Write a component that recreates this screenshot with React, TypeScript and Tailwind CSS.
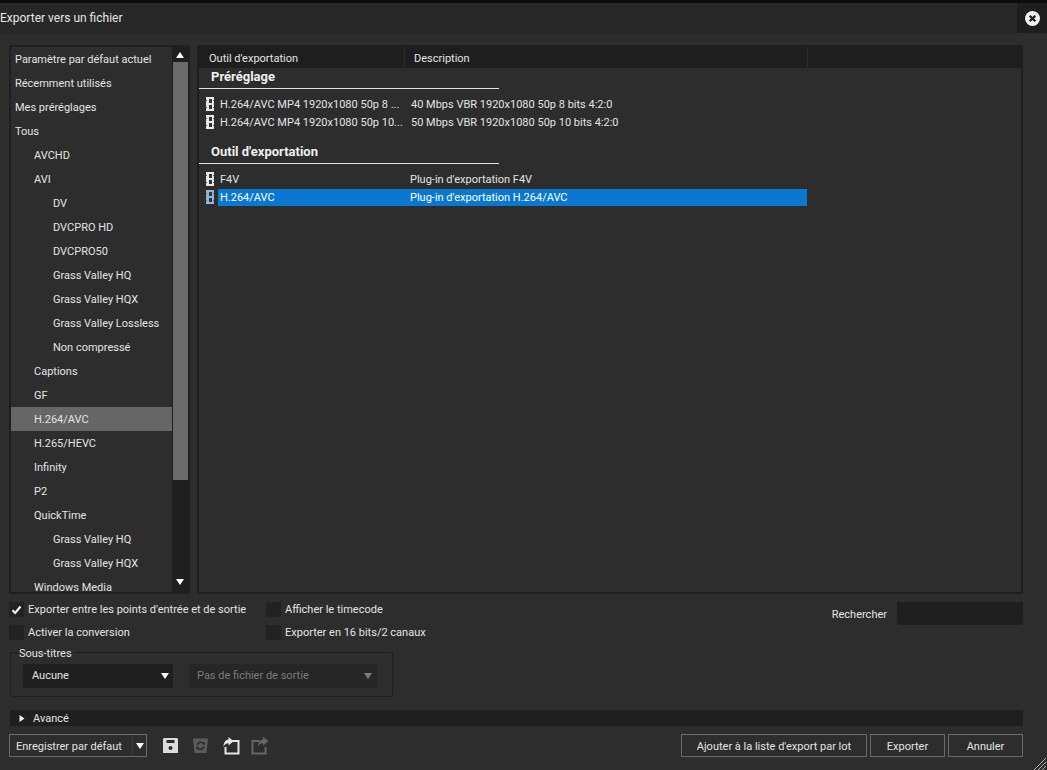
import React from "react";

const tree: [string, number][] = [
  ["Paramètre par défaut actuel", 0],
  ["Récemment utilisés", 0],
  ["Mes préréglages", 0],
  ["Tous", 0],
  ["AVCHD", 1],
  ["AVI", 1],
  ["DV", 2],
  ["DVCPRO HD", 2],
  ["DVCPRO50", 2],
  ["Grass Valley HQ", 2],
  ["Grass Valley HQX", 2],
  ["Grass Valley Lossless", 2],
  ["Non compressé", 2],
  ["Captions", 1],
  ["GF", 1],
  ["H.264/AVC", 1],
  ["H.265/HEVC", 1],
  ["Infinity", 1],
  ["P2", 1],
  ["QuickTime", 1],
  ["Grass Valley HQ", 2],
  ["Grass Valley HQX", 2],
  ["Windows Media", 1],
];

function Film({ color = "#e8e8e8" }: { color?: string }) {
  return (
    <svg width="8" height="14" viewBox="0 0 8 14" className="shrink-0">
      <rect x="0" y="0" width="8" height="14" fill={color} />
      <rect x="3" y="2" width="3" height="4" fill="#333333" />
      <rect x="3" y="8" width="3" height="4" fill="#333333" />
      <rect x="0" y="3" width="1" height="1" fill="#666666" />
      <rect x="0" y="10" width="1" height="1" fill="#666666" />
      <rect x="7" y="3" width="1" height="1" fill="#666666" />
      <rect x="7" y="10" width="1" height="1" fill="#666666" />
    </svg>
  );
}

function Row({ name, desc, selected, descPad = 0 }: { name: string; desc: string; selected?: boolean; descPad?: number }) {
  return (
    <div className="flex h-[18px] w-[608px] items-center pl-[7px]">
      <Film color={selected ? "#8db8dc" : "#e8e8e8"} />
      <div className={`ml-[4px] flex h-[17px] flex-1 items-center pt-[2px] ${selected ? "bg-[#0a78d2] text-white" : ""}`}>
        <span className="w-[192px] shrink-0 overflow-hidden pl-[2px] whitespace-nowrap">{name}</span>
        <span style={{ paddingLeft: descPad }}>{desc}</span>
      </div>
    </div>
  );
}

function Section({ title }: { title: string }) {
  return (
    <div className="h-[21px] w-[300px] border-b border-[#e0e0e0] pl-[12px] pt-[1px] text-[13px] leading-[16px] font-bold text-[#f0f0f0]">
      {title}
    </div>
  );
}

function Check({ checked, label }: { checked?: boolean; label: string }) {
  return (
    <div className="flex h-[15px] items-center gap-[4px] whitespace-nowrap">
      <div className="flex h-[15px] w-[15px] shrink-0 items-center justify-center bg-[#222222]">
        {checked && (
          <svg width="11" height="10" viewBox="0 0 11 10">
            <path d="M1.5 5.2 L4.2 8 L9.5 1.5" fill="none" stroke="#fff" strokeWidth="2" />
          </svg>
        )}
      </div>
      <span className="pt-[2px]">{label}</span>
    </div>
  );
}

function Caret({ up, color = "#fff" }: { up?: boolean; color?: string }) {
  return (
    <svg width="8" height="6" viewBox="0 0 8 6">
      <path d={up ? "M4 0 L8 6 L0 6 Z" : "M0 0 L8 0 L4 6 Z"} fill={color} />
    </svg>
  );
}

export default function App() {
  return (
    <div
      className="flex h-[770px] w-[1047px] flex-col overflow-hidden bg-[#2d2d2d] text-[11px] text-[#e4e4e4]"
      style={{ fontFamily: 'Roboto, "Open Sans", sans-serif' }}
    >
      <div className="h-[3px] shrink-0 bg-[#0c0c0c]" />
      <div className="flex h-[30px] shrink-0 items-center bg-[#272727] text-[12px] text-[#e6e6e6]">
        <span className="flex-1">Exporter vers un fichier</span>
        <div className="flex h-[30px] w-[30px] items-center justify-center bg-[#1e1e1e]">
          <svg width="15" height="15" viewBox="0 0 15 15">
            <circle cx="7.5" cy="7.5" r="7.5" fill="#f0f0f0" />
            <path d="M4.7 4.7 L10.3 10.3 M10.3 4.7 L4.7 10.3" stroke="#1e1e1e" strokeWidth="2.2" />
          </svg>
        </div>
      </div>

      <div className="mt-[12px] flex h-[549px] shrink-0 gap-[7px] pl-[9px] pr-[24px]">
        <div className="flex w-[181px] shrink-0 rounded-[2px] border-[2px] border-[#1f1f1f] bg-[#2d2d2d]">
          <div className="h-full flex-1 overflow-hidden">
            {tree.map(([t, d], i) => (
              <div
                key={i}
                className={`flex h-[24px] items-center pt-[3px] whitespace-nowrap ${t === "H.264/AVC" ? "bg-[#666666]" : ""} ${d === 0 ? "pl-[4px]" : d === 1 ? "pl-[23px]" : "pl-[42px]"}`}
              >
                {t}
              </div>
            ))}
          </div>
          <div className="flex h-full w-[16px] shrink-0 flex-col items-center bg-[#1f1f1f]">
            <div className="flex h-[15px] items-center justify-center"><Caret up /></div>
            <div className="h-[418px] w-[15px] bg-[#6b6b6b]" />
            <div className="flex-1" />
            <div className="flex h-[20px] items-center justify-center"><Caret /></div>
          </div>
        </div>

        <div className="flex-1 rounded-[2px] border-[2px] border-[#1f1f1f] bg-[#2d2d2d]">
          <div className="flex h-[21px] items-center bg-[#1e1e1e]">
            <div className="h-full w-[206px] border-r border-[#2d2d2d] pl-[10px] leading-[23px]">Outil d'exportation</div>
            <div className="h-full w-[403px] border-r border-[#2d2d2d] pl-[9px] leading-[23px]">Description</div>
          </div>
          <Section title="Préréglage" />
          <div className="mt-[6px]">
            <Row name="H.264/AVC MP4 1920x1080 50p 8 ..." desc="40 Mbps VBR 1920x1080 50p 8 bits 4:2:0" descPad={1} />
            <Row name="H.264/AVC MP4 1920x1080 50p 10..." desc="50 Mbps VBR 1920x1080 50p 10 bits 4:2:0" descPad={1} />
          </div>
          <div className="mt-[12px]" />
          <Section title="Outil d'exportation" />
          <div className="mt-[6px]">
            <Row name="F4V" desc="Plug-in d'exportation F4V" />
            <Row name="H.264/AVC" desc="Plug-in d'exportation H.264/AVC" selected />
          </div>
        </div>
      </div>

      <div className="mt-[8px] flex h-[46px] shrink-0 pl-[9px] pr-[24px]">
        <div className="flex w-[257px] flex-col gap-[8px]">
          <Check checked label="Exporter entre les points d'entrée et de sortie" />
          <Check label="Activer la conversion" />
        </div>
        <div className="flex flex-col gap-[8px]">
          <Check label="Afficher le timecode" />
          <Check label="Exporter en 16 bits/2 canaux" />
        </div>
        <div className="ml-auto flex h-[23px] items-center gap-[10px]">
          <span className="pt-[4px]">Rechercher</span>
          <div className="h-[23px] w-[126px] rounded-[2px] bg-[#1f1f1f]" />
        </div>
      </div>

      <div className="relative ml-[10px] mt-[4px] flex h-[45px] w-[383px] shrink-0 items-center gap-[16px] rounded-[2px] border border-[#1f1f1f] pl-[12px]">
        <span className="absolute left-[6px] top-[-7px] bg-[#2d2d2d] px-[2px] leading-[16px]">Sous-titres</span>
        <div className="mt-[2px] flex h-[24px] w-[150px] items-center justify-between rounded-[2px] bg-[#1f1f1f] pl-[9px] pr-[4px]">
          <span className="pt-[2px]">Aucune</span>
          <Caret />
        </div>
        <div className="mt-[2px] flex h-[24px] w-[188px] items-center justify-between rounded-[2px] bg-[#262626] pl-[8px] pr-[5px] text-[#7c7c7c]">
          <span className="pt-[2px]">Pas de fichier de sortie</span>
          <Caret color="#7c7c7c" />
        </div>
      </div>

      <div className="ml-[10px] mr-[24px] mt-[13px] flex h-[16px] shrink-0 items-center bg-[#1f1f1f] pl-[9px]">
        <svg width="6" height="7" viewBox="0 0 6 7"><path d="M0.5 0 L5.5 3.5 L0.5 7 Z" fill="#eee" /></svg>
        <span className="ml-[8px] pt-[2px]">Avancé</span>
      </div>

      <div className="ml-[9px] mr-[24px] mt-[8px] flex h-[23px] shrink-0 items-center">
        <div className="flex h-[23px] w-[138px] items-center border border-[#6a6a6a]">
          <span className="w-[122px] pl-[6px] pt-[3px] whitespace-nowrap">Enregistrer par défaut</span>
          <div className="flex h-full flex-1 items-center justify-center border-l border-[#3c3c3c]"><Caret /></div>
        </div>
        <div className="ml-[16px] flex items-center gap-[15px]">
          <svg width="15" height="15" viewBox="0 0 15 15">
            <path d="M1 0 H14 L15 1 V15 H0 V1 Z" fill="#dcdcdc" />
            <rect x="3.5" y="2" width="8" height="3" fill="#2d2d2d" />
            <circle cx="7.5" cy="10" r="2" fill="#2d2d2d" />
          </svg>
          <svg width="15" height="15" viewBox="0 0 15 15">
            <path d="M0 0.5 H15 L13.5 15 H1.5 Z" fill="#5a5a5a" />
            <path d="M10.8 6 A3.6 3.6 0 0 0 4.2 7 M4.2 9.5 A3.6 3.6 0 0 0 10.8 8.5" fill="none" stroke="#2d2d2d" strokeWidth="1.6" />
            <path d="M9 6.5 H12 V3.8 Z M6 8.5 H3 V11.2 Z" fill="#2d2d2d" />
          </svg>
          <svg width="18" height="18" viewBox="0 0 18 18" className="-ml-[1px]">
            <path d="M9 4 H16.5 V16.5 H3.5 V10" fill="none" stroke="#e6e6e6" strokeWidth="2" />
            <path d="M6.5 0 L11.5 4.2 L6.5 8.4 V6.2 C4 6.2 2.5 7.4 1.5 10 C1.5 6 3.5 2.8 6.5 2.6 Z" fill="#e6e6e6" />
          </svg>
          <svg width="18" height="18" viewBox="0 0 18 18" className="-ml-[4px]">
            <path d="M8.5 4 H1.5 V16.5 H14.5 V10" fill="none" stroke="#666" strokeWidth="2" />
            <path d="M12 0 L17.5 4.2 L12 8.4 V6.2 C9.5 6.2 8 7.4 7 10 C7 6 9 2.8 12 2.6 Z" fill="#666" />
          </svg>
        </div>
        <div className="ml-auto flex gap-[3px]">
          <div className="flex h-[23px] w-[186px] items-center justify-center border border-[#6a6a6a] pt-[3px]">Ajouter à la liste d'export par lot</div>
          <div className="flex h-[23px] w-[75px] items-center justify-center border border-[#6a6a6a] pt-[3px]">Exporter</div>
          <div className="flex h-[23px] w-[75px] items-center justify-center border border-[#6a6a6a] pt-[3px]">Annuler</div>
        </div>
      </div>

      <div className="flex flex-1 items-end justify-end">
        <svg width="14" height="14" viewBox="0 0 14 14">
          <path d="M1 13 L13 1 M5 13 L13 5 M9 13 L13 9" stroke="#b0b0b0" strokeWidth="1" />
        </svg>
      </div>
    </div>
  );
}
